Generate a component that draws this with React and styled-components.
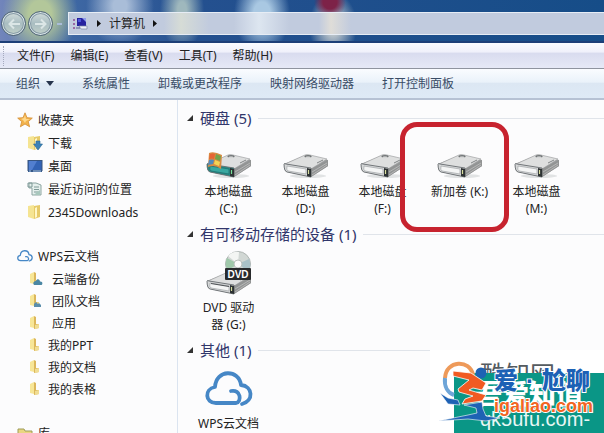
import React from 'react';
import styled, { createGlobalStyle, css } from 'styled-components';

const GlobalStyle = createGlobalStyle`
  * { box-sizing: border-box; }
  body {
    margin: 0;
    font: 12px/17px "Noto Sans", "Noto Sans CJK SC", sans-serif;
    color: #222;
    background: #fcfcfd;
  }
  button { font: inherit; color: inherit; border: 0; padding: 0; background: none; }
  ul { list-style: none; margin: 0; padding: 0; }
  a { color: inherit; text-decoration: none; }
  svg { display: block; flex: none; }
`;

const Window = styled.div`
  position: relative;
  display: flex;
  flex-direction: column;
  height: 100vh;
  overflow: hidden;
`;

const TitleBar = styled.header`
  display: flex;
  align-items: center;
  height: 43px;
  padding-top: 6px;
  border-bottom: 2px solid #1d3f78;
  background:
    radial-gradient(circle at 330px 2px, #7d2248 0 7px, transparent 16px),
    radial-gradient(ellipse 24px 34px at 333px 26px, #c9cfd0 20%, transparent),
    radial-gradient(ellipse 28px 40px at 262px 14px, #a9c8e2 30%, transparent),
    radial-gradient(ellipse 22px 40px at 182px 10px, #9fb8bd 20%, transparent),
    radial-gradient(ellipse 34px 40px at 120px 6px, #a9bdd8 20%, transparent),
    radial-gradient(ellipse 38px 44px at 40px 14px, #b3c79a 30%, transparent),
    linear-gradient(90deg, #7285bb, #3f68a4 70px, #24508f 200px, #164d88);
`;

const RoundButton = styled.button`
  display: grid;
  place-items: center;
  width: 25px;
  height: 25px;
  margin-left: 1px;
  margin-right: 1px;
  border-radius: 50%;
  border: 1px solid #4d6276;
  background: linear-gradient(#d5dfdd, #a9bdc1 50%, #c3d2ca);
  box-shadow: inset 0 0 0 1px #dbe7e8, inset 0 0 0 2px #8599a5;
`;

const HistoryMark = styled.span`
  width: 5px;
  height: 2px;
  margin-left: 3px;
  background: #a9bcd8;
`;

const AddressBar = styled.nav`
  display: flex;
  align-items: center;
  flex: 1;
  gap: 8px;
  height: 23px;
  margin-left: 6px;
  padding-left: 4px;
  border: 1px solid #e7edf5;
  border-right: 0;
  background:
    linear-gradient(90deg, transparent 250px, #dfddd8 262px, transparent 282px),
    linear-gradient(90deg, transparent 165px, #dde6f0 190px, transparent 220px),
    linear-gradient(90deg, transparent 95px, #d6dcd6 112px, transparent 140px),
    #c1cbde;
`;

const MenuBar = styled.nav`
  display: flex;
  align-items: center;
  gap: 16px;
  height: 26px;
  padding-left: 3px;
  border-bottom: 1px solid #8f949f;
  background: linear-gradient(#fafbff, #f0f1fb 35%, #d9dcef 42%, #e6e9f6);
`;

const Grip = styled.span`
  height: 20px;
  margin-right: -3px;
  border-left: 1px dotted #a4a9bd;
`;

const CommandBar = styled.div`
  display: flex;
  align-items: center;
  gap: 28px;
  height: 31px;
  padding: 0 16px;
  border-bottom: 2px solid #b6c2d4;
  color: #3a4c66;
  background: linear-gradient(#fafcff, #eaf2fa 45%, #dce7f3 50%, #deeaf6);
`;

const CommandButton = styled.button`
  display: flex;
  align-items: center;
  gap: 6px;
  white-space: nowrap;
`;

const Body = styled.div`
  display: flex;
  flex: 1;
  min-height: 0;
`;

const Sidebar = styled.aside`
  flex: 0 0 178px;
  padding: 10px 0 0 17px;
  border-right: 1px solid #dbe4f0;
`;

const NavGroup = styled.section`
  margin-bottom: 24px;
`;

const NavHeading = styled.a`
  display: flex;
  align-items: center;
  gap: 5px;
  height: 20px;
  margin-bottom: 3px;
`;

const NavList = styled.ul`
  display: flex;
  flex-direction: column;
  gap: ${p => (p.$compact ? 2 : 3)}px;
  padding-left: 10px;
`;

const NavLink = styled.a`
  display: flex;
  align-items: center;
  gap: ${p => (p.$indented ? 9 : 5)}px;
  height: 20px;
`;

const Content = styled.main`
  flex: 1;
  min-width: 0;
  padding: 8px 0 0 9px;
`;

const Section = styled.section`
  min-height: 116px;
`;

const SectionHeader = styled.div`
  display: flex;
  align-items: center;
  gap: 7px;
  height: 20px;

  &::after {
    content: "";
    flex: 1;
    height: 1px;
    background: #e0e4ea;
  }
`;

const SectionTitle = styled.h2`
  margin: 0;
  font-size: 15px;
  line-height: 20px;
  font-weight: 400;
  color: #31366b;
`;

const DriveGrid = styled.div`
  display: flex;
  padding: 6px 0 0 3px;
`;

const Drive = styled.button`
  position: relative;
  display: flex;
  flex-direction: column;
  align-items: center;
  flex: none;
  width: 77px;
`;

const IconSlot = styled.span`
  display: flex;
  align-items: ${p => (p.$top ? 'center' : 'flex-end')};
  height: 49px;
  padding-bottom: 3px;
`;

const DriveLabel = styled.span`
  width: 64px;
`;

const Highlight = styled.span`
  position: absolute;
  z-index: 1;
  inset: -12px -11px auto -21px;
  height: 110px;
  border: 5px solid #c7232f;
  border-radius: 17px;
`;

const Watermark = styled.div`
  position: absolute;
  right: 0;
  bottom: 0;
  width: 174px;
  height: 83px;
  overflow: hidden;
  background: #fff;
`;

const markLayer = css`
  position: absolute;
  white-space: nowrap;
`;

const TealPanel = styled.span`
  ${markLayer}
  inset: 23px 0 0 24px;
  background: #0a9686;
`;

const MarkText = styled.span`
  ${markLayer}
  left: ${p => p.$x}px;
  top: ${p => p.$y}px;
  font-family: "Liberation Sans", "Noto Sans CJK SC", sans-serif;
  font-size: ${p => p.$size}px;
  line-height: 28px;
  font-weight: ${p => (p.$bold ? 900 : 400)};
  color: ${p => p.$color};
  ${p => p.$outline && css`
    -webkit-text-stroke: 2px #fff;
    paint-order: stroke fill;
  `}
`;

const MarkDot = styled.span`
  padding: 0 8px;
`;

const MarkLogo = styled.svg`
  ${markLayer}
  left: 8px;
  top: 8px;
`;

function Triangle() {
  return <svg width="4" height="7" viewBox="0 0 4 7"><path d="M0 0L4 3.5L0 7Z" fill="#111" /></svg>;
}

function NavArrow({ back }) {
  return (
    <svg width="14" height="12" viewBox="0 0 14 12" fill="none" stroke="#dbe6e6" strokeWidth="2">
      <path d={back ? 'M13 6H3M7 1.5L2.5 6L7 10.5' : 'M1 6H11M7 1.5L11.5 6L7 10.5'} />
    </svg>
  );
}

function ComputerIcon() {
  return (
    <svg width="16" height="14" viewBox="0 0 16 14">
      <rect x="4" y="1" width="9" height="8" fill="#2622a0" />
      <path d="M5 2H8V5H5Z" fill="#4b55d8" />
      <path d="M9 1H13V5Z" fill="#8f9bea" />
      <path d="M6 9H14V12H8Z" fill="#eef1f8" stroke="#7c86a6" strokeWidth=".7" />
      <path d="M1 2V4M1 6V8M1 10V12" stroke="#8a4b92" strokeWidth="1.5" />
      <path d="M3 11H7" stroke="#59618f" />
    </svg>
  );
}

function StarIcon() {
  return (
    <svg width="16" height="16" viewBox="0 0 16 16">
      <path d="M8 .8L10 5.7L15.3 6.1L11.3 9.6L12.6 14.8L8 12L3.4 14.8L4.7 9.6L.7 6.1L6 5.7Z" fill="#f2b24b" stroke="#d48e34" strokeWidth=".8" />
      <path d="M8 3L9 7L13 7L9 9L8 11L6 8L4 7L7 6Z" fill="#ffd88b" />
    </svg>
  );
}

function FolderIcon({ badge, large }) {
  return (
    <svg width="16" height="16" viewBox="0 0 16 16">
      {large
        ? <><path d="M1 2L7 1V15L1 13Z" fill="#f5e492" /><path d="M7 2L13 1V13L7 15Z" fill="#e6ca69" /><path d="M8 4L10 3V13L8 14Z" fill="#fff7c8" /></>
        : <><path d="M3 3L7 1V13L3 12Z" fill="#f7e697" /><path d="M7 1L9 2V9L12 9V13L7 14Z" fill="#dcb75b" /><path d="M8 10L12 9V13L8 14Z" fill="#f0dd94" /></>}
      {badge === 'download' && <path d="M9 6H13V9H15.5L11 15L6.5 9H9Z" fill="#3c82b8" stroke="#286993" strokeWidth=".6" />}
      {badge === 'cloud' && <path d="M7 14C5 11 8 10 9 10C10 7 13 8 13 10.5C16 10 16 14 14 14Z" fill="#4b87a4" />}
      {badge === 'team' && <path d="M7 14V11L9 9L11 11L12 10L14 12V14Z" fill="#5b8eab" />}
    </svg>
  );
}

function DesktopIcon() {
  return (
    <svg width="16" height="16" viewBox="0 0 16 16">
      <rect x="1" y="2.5" width="14" height="10" fill="#3363b5" stroke="#38557f" />
      <path d="M2 3H10L5 12H2Z" fill="#527fd0" />
      <path d="M1 12.5H15V14H1Z" fill="#34588b" />
      <path d="M2 13H4M6 13H14" stroke="#a9c6e8" />
    </svg>
  );
}

function RecentIcon() {
  return (
    <svg width="16" height="16" viewBox="0 0 16 16">
      <path d="M2 2H9L14 4V14H5V7H2Z" fill="#e4efec" stroke="#8da5a2" />
      <path d="M1 2H5V6H1ZM7 6H12M7 8.5H12M7 11H11" fill="none" stroke="#7e9997" />
      <path d="M10 11L13 9V14H7Z" fill="#a8c7bd" />
    </svg>
  );
}

function CloudIcon({ size = 48 }) {
  return (
    <svg width={size} height={size * 0.75} viewBox="0 0 48 36" fill="none" stroke="#4687c6" strokeWidth="3.8" strokeLinecap="round" strokeLinejoin="round">
      <path d="M31 32H11C0 32 -1 18 10 16C11 -2 34 -2 36 14C48 15 49 30 37 33M26 20C36 18 37 31 31 32" />
    </svg>
  );
}

function DiskShape({ system }) {
  return (
    <>
      <path d="M1 12L23 3L45 8V14L28 25L4 20C1 19 1 16 1 12Z" fill="#999b9c" />
      <path d="M2 12L22 3Q24 2 27 3L44 7L28 17Z" fill="#dedfdf" stroke="#a1a2a3" strokeWidth=".7" />
      <path d="M28 17L45 8V14L28 25Z" fill="#929494" />
      <path d="M29 20L44 11M29 23L44 13" stroke="#c5c6c6" strokeWidth=".7" />
      <path d="M1 12Q1 11 3 12L28 16V25L4 20Q1 19 1 12Z" fill={system ? '#258b86' : '#d6d8d9'} stroke="#696d70" strokeWidth=".9" />
      <path d="M4 14L23 17V22L5 19Q3 18 4 14Z" fill={system ? '#39a8a0' : '#f4f5f5'} stroke={system ? '#206b6b' : '#a2a5a8'} strokeWidth=".7" />
      <path d="M24 16L28 17V25L24 24Z" fill="#2d3233" />
      <path d="M25.5 18V22" stroke={system ? '#74df98' : '#d8dd9e'} strokeWidth="1.2" />
      <ellipse cx="25" cy="4.5" rx="3.5" ry="1.3" fill="#505557" />
      <ellipse cx="25" cy="5.3" rx="3" ry="1" fill="#d5d6d6" />
      <path d="M34 11L40 8" stroke="#808485" />
    </>
  );
}

function DiskIcon({ system }) {
  return (
    <svg width="46" height="28" viewBox="0 0 46 28">
      <ellipse cx="25" cy="24" rx="18" ry="2" fill="#e1e3e4" />
      <DiskShape system={system} />
      {system && (
        <g>
          <path d="M3 1Q8 -1 16 3L15 17Q9 12 2 15Z" fill="#d98b43" />
          <path d="M4 2Q7 1 9 2L8 7Q6 6 3 7Z" fill="#e66535" />
          <path d="M10 2L15 4L14 9L9 7Z" fill="#72a34b" />
          <path d="M3 8Q6 7 8 8L7 12L2 13Z" fill="#528abb" />
          <path d="M9 8L14 10L13 14L8 12Z" fill="#f2d455" />
        </g>
      )}
    </svg>
  );
}

function DvdIcon() {
  return (
    <svg width="46" height="45" viewBox="0 0 46 45">
      <g transform="translate(0 18)"><DiskShape /></g>
      <path d="M5 32L23 35V36L5 33Z" fill="#4d5154" />
      <circle cx="32" cy="13" r="12.5" fill="#d1d7d4" stroke="#aeb5b3" />
      <path d="M32 13L22 5Q27 0 33 1Z" fill="#f3f5f3" />
      <path d="M32 13L21 7Q18 14 22 19Z" fill="#9fc8aa" />
      <path d="M32 13L43 8Q46 15 42 20Z" fill="#a9c2c8" />
      <circle cx="32" cy="13" r="4" fill="#fafafa" stroke="#b8bfbc" />
      <rect x="19" y="17" width="26" height="12" rx="1" fill="#282a2c" />
      <text x="32" y="27" textAnchor="middle" fill="#fff" fontFamily="Liberation Sans, sans-serif" fontWeight="700" fontSize="10">DVD</text>
    </svg>
  );
}

function LibraryIcon() {
  return (
    <svg width="16" height="16" viewBox="0 0 16 16">
      <path d="M1 4H7L8 6H15V15H1Z" fill="#e9d680" stroke="#9e9c58" />
      <path d="M2 8H15V15H3Z" fill="#f5e9a8" />
    </svg>
  );
}

const favorites = [
  ['下载', <FolderIcon large badge="download" />],
  ['桌面', <DesktopIcon />],
  ['最近访问的位置', <RecentIcon />],
  ['2345Downloads', <FolderIcon large />],
];

const cloudDocs = [
  ['云端备份', 'cloud', true],
  ['团队文档', 'team', true],
  ['应用', null, true],
  ['我的PPT'],
  ['我的文档'],
  ['我的表格'],
];

const disks = ['本地磁盘 (C:)', '本地磁盘 (D:)', '本地磁盘 (F:)', '新加卷 (K:)', '本地磁盘 (M:)'];

function DriveSection({ title, children }) {
  return (
    <Section>
      <SectionHeader>
        <svg width="6" height="6" viewBox="0 0 6 6"><path d="M6 0V6H0Z" fill="#333" /></svg>
        <SectionTitle>{title}</SectionTitle>
      </SectionHeader>
      <DriveGrid>{children}</DriveGrid>
    </Section>
  );
}

export default function App() {
  return (
    <Window>
      <GlobalStyle />
      <TitleBar>
        <RoundButton aria-label="后退"><NavArrow back /></RoundButton>
        <RoundButton aria-label="前进"><NavArrow /></RoundButton>
        <HistoryMark />
        <AddressBar>
          <ComputerIcon />
          <Triangle />
          <button>计算机</button>
          <Triangle />
        </AddressBar>
      </TitleBar>
      <MenuBar>
        <Grip />
        {['文件(F)', '编辑(E)', '查看(V)', '工具(T)', '帮助(H)'].map(m => <button key={m}>{m}</button>)}
      </MenuBar>
      <CommandBar>
        <CommandButton>
          组织
          <svg width="8" height="5" viewBox="0 0 8 5"><path d="M0 0H8L4 5Z" fill="#26344d" /></svg>
        </CommandButton>
        {['系统属性', '卸载或更改程序', '映射网络驱动器', '打开控制面板'].map(c => <CommandButton key={c}>{c}</CommandButton>)}
      </CommandBar>
      <Body>
        <Sidebar>
          <NavGroup>
            <NavHeading href="#favorites"><StarIcon />收藏夹</NavHeading>
            <NavList>
              {favorites.map(([name, icon]) => (
                <li key={name}><NavLink href="#favorites">{icon}{name}</NavLink></li>
              ))}
            </NavList>
          </NavGroup>
          <NavGroup>
            <NavHeading href="#wps"><CloudIcon size={16} />WPS云文档</NavHeading>
            <NavList $compact>
              {cloudDocs.map(([name, badge, indented]) => (
                <li key={name}><NavLink href="#wps" $indented={indented}><FolderIcon badge={badge} />{name}</NavLink></li>
              ))}
            </NavList>
          </NavGroup>
          <NavHeading href="#libraries"><LibraryIcon />库</NavHeading>
        </Sidebar>
        <Content>
          <DriveSection title="硬盘 (5)">
            {disks.map((name, i) => (
              <Drive key={name}>
                <IconSlot><DiskIcon system={i === 0} /></IconSlot>
                <DriveLabel>{name}</DriveLabel>
                {i === 3 && <Highlight />}
              </Drive>
            ))}
          </DriveSection>
          <DriveSection title="有可移动存储的设备 (1)">
            <Drive>
              <IconSlot><DvdIcon /></IconSlot>
              <DriveLabel>DVD 驱动<br />器 (G:)</DriveLabel>
            </Drive>
          </DriveSection>
          <DriveSection title="其他 (1)">
            <Drive>
              <IconSlot $top><CloudIcon /></IconSlot>
              <DriveLabel>WPS云文档</DriveLabel>
            </Drive>
          </DriveSection>
        </Content>
      </Body>
      <Watermark>
        <MarkText $x={50} $y={11} $size={25} $color="#555b60">酷知网</MarkText>
        <TealPanel />
        <MarkText $x={45} $y={31} $size={27} $bold $color="#fff">吾爱知值</MarkText>
        <MarkText $x={50} $y={55} $size={20} $color="#e8f7f4">qk5ufu.com-</MarkText>
        <MarkLogo width="66" height="66" viewBox="0 0 66 66">
          <path d="M7 20C8 2 32 1 35 17" fill="none" stroke="#ee9a5a" strokeWidth="4" />
          <path d="M7 20C6 29 10 35 16 37" fill="none" stroke="#6ea5d8" strokeWidth="4" />
          <circle cx="43" cy="15" r="5.5" fill="#1e62b4" />
          <path d="M15 13L33 15L48 25L44 32L35 30L31 32L48 37L44 43L24 46L27 41L35 38L21 34L20 31L31 22L15 18Z" fill="#f15a22" stroke="#fff" strokeWidth=".8" />
          <path d="M2 35L10 40L20 42L22 47L10 46Z" fill="#1e62b4" stroke="#fff" strokeWidth=".6" />
          <path d="M26 47L44 44L45 51L48 58L62 60L48 63L30 61L0 63L30 57L39 55L38 50Z" fill="#1e62b4" stroke="#fff" strokeWidth=".6" />
        </MarkLogo>
        <MarkText $x={64} $y={17} $size={24} $bold $outline $color="#1c61b5">爱<MarkDot>·</MarkDot>尬聊</MarkText>
        <MarkText $x={64} $y={42} $size={18} $bold $outline $color="#f26522">igaliao.com</MarkText>
      </Watermark>
    </Window>
  );
}
